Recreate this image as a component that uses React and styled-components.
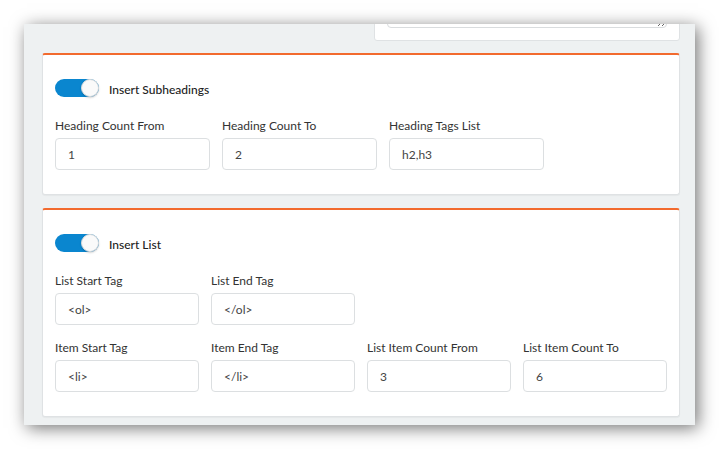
import React from "react";
import styled, { createGlobalStyle } from "styled-components";

const GlobalStyle = createGlobalStyle`
  body {
    margin: 0;
    background: #ffffff;
    font-family: Lato, "Open Sans", "Liberation Sans", sans-serif;
  }
`;

const Stage = styled.div`
  padding: 24px;
`;

const Frame = styled.div`
  width: 671px;
  height: 401px;
  box-sizing: border-box;
  background: #eef1f2;
  box-shadow: 3px 3px 16px rgba(0, 0, 0, 0.55);
  overflow: hidden;
  padding: 0 15px 0 18px;
  display: flex;
  flex-direction: column;
`;

const Card = styled.div`
  background: #ffffff;
  border: 1px solid #dfe2e4;
  border-top: 2px solid #f26a2e;
  border-radius: 3px;
  padding: 24px 12px 24px 12px;
  margin-top: ${({ $gap }) => $gap}px;
  box-shadow: 0 1px 1px rgba(0, 0, 0, 0.04);
`;

const TopCard = styled.div`
  align-self: flex-end;
  width: 306px;
  box-sizing: border-box;
  background: #ffffff;
  border: 1px solid #dfe2e4;
  border-radius: 3px;
  padding: 12px;
  margin-top: -49px;
`;

const TextArea = styled.textarea`
  display: block;
  width: 100%;
  height: 40px;
  box-sizing: border-box;
  border: 1px solid #d9dcde;
  border-radius: 4px;
  resize: vertical;
`;

const ToggleRow = styled.div`
  display: flex;
  align-items: center;
  gap: 10px;
  height: 18px;
  margin-bottom: 22px;
`;

const Track = styled.div`
  width: 44px;
  height: 18px;
  border-radius: 9px;
  background: ${({ $on }) => ($on ? "#0a86cf" : "#c9ced2")};
  display: flex;
  justify-content: ${({ $on }) => ($on ? "flex-end" : "flex-start")};
`;

const Knob = styled.div`
  width: 18px;
  height: 18px;
  box-sizing: border-box;
  border-radius: 50%;
  background: #fafafa;
  border: 1px solid #d6d9db;
  box-shadow: 0 1px 2px rgba(0, 0, 0, 0.18);
`;

const ToggleLabel = styled.span`
  font-size: 12px;
  color: #222;
  font-weight: 500;
  padding-top: 2px;
`;

const Grid = styled.div`
  display: grid;
  grid-template-columns: repeat(${({ $cols }) => $cols}, ${({ $w }) => $w}px);
  column-gap: 12px;
  row-gap: 16px;
`;

const Field = styled.div`
  display: flex;
  flex-direction: column;
`;

const Label = styled.label`
  font-size: 12px;
  line-height: 14px;
  color: #333;
  margin-bottom: 5px;
`;

const Input = styled.div`
  height: 32px;
  box-sizing: border-box;
  border: 1px solid #dcdfe1;
  border-radius: 4px;
  padding: 0 12px;
  display: flex;
  align-items: center;
  font-size: 12px;
  color: #444;
`;

const Toggle = ({ label }) => (
  <ToggleRow>
    <Track $on>
      <Knob />
    </Track>
    <ToggleLabel>{label}</ToggleLabel>
  </ToggleRow>
);

const headingFields = [
  ["Heading Count From", "1"],
  ["Heading Count To", "2"],
  ["Heading Tags List", "h2,h3"],
];

const listFields = [
  ["List Start Tag", "<ol>"],
  ["List End Tag", "</ol>"],
  null,
  null,
  ["Item Start Tag", "<li>"],
  ["Item End Tag", "</li>"],
  ["List Item Count From", "3"],
  ["List Item Count To", "6"],
];

const App = () => (
  <>
    <GlobalStyle />
    <Stage>
      <Frame>
        <TopCard>
          <TextArea readOnly />
        </TopCard>
        <Card $gap={12}>
          <Toggle label="Insert Subheadings" />
          <Grid $cols={3} $w={155}>
            {headingFields.map(([l, v]) => (
              <Field key={l}>
                <Label>{l}</Label>
                <Input>{v}</Input>
              </Field>
            ))}
          </Grid>
        </Card>
        <Card $gap={13}>
          <Toggle label="Insert List" />
          <Grid $cols={4} $w={144}>
            {listFields.map((f, i) =>
              f ? (
                <Field key={i}>
                  <Label>{f[0]}</Label>
                  <Input>{f[1]}</Input>
                </Field>
              ) : (
                <div key={i} />
              )
            )}
          </Grid>
        </Card>
      </Frame>
    </Stage>
  </>
);

export default App;
